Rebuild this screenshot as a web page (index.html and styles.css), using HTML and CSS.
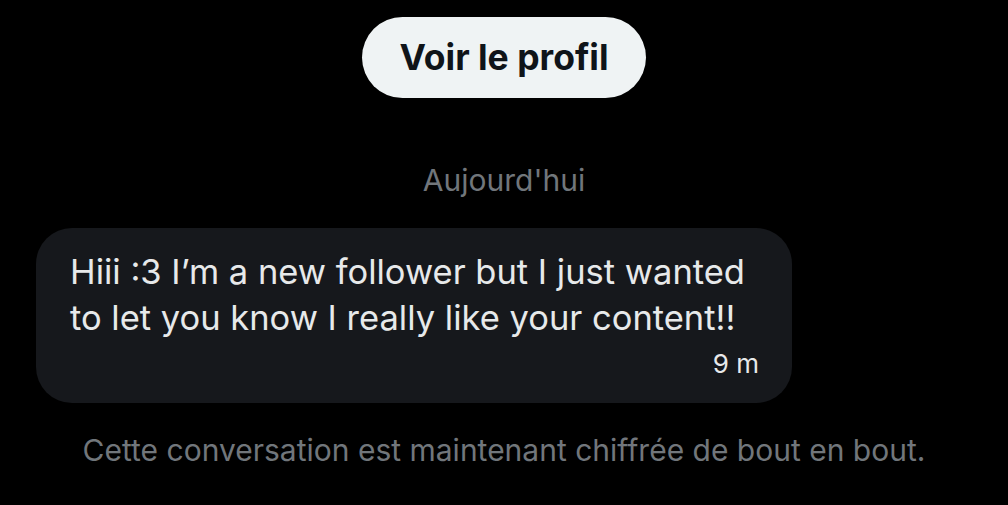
FILE: index.html
```html
<!DOCTYPE html>
<html lang="fr">
<head>
  <meta charset="UTF-8">
  <title>Messages</title>
  <link rel="stylesheet" href="styles.css">
</head>
<body>
  <div class="thread">
    <button class="profile-btn">Voir le profil</button>

    <div class="day">Aujourd'hui</div>

    <div class="row">
      <div class="bubble">
        <p class="text">Hiii :3 I’m a new follower but I just wanted to let you know I really like your content!!</p>
        <div class="time">9 m</div>
      </div>
    </div>

    <div class="notice">Cette conversation est maintenant chiffrée de bout en bout.</div>
  </div>
</body>
</html>
```

FILE: styles.css
```css
body {
  background-color: #000;
  color: #e7e9ea;
  font-family: Inter, "Noto Sans", sans-serif;
  margin: 0;
}
.thread {
  display: flex;
  flex-direction: column;
  align-items: center;
  padding-top: 17px;
}
.profile-btn {
  background-color: #eff3f4;
  color: #0f1419;
  border: none;
  border-radius: 41px;
  height: 81px;
  width: 284px;
  padding: 0;
  font-family: inherit;
  font-size: 35.5px;
  font-weight: 700;
  cursor: pointer;
}
.day {
  margin-top: 64px;
  color: #71767b;
  font-size: 30px;
  line-height: 36px;
}
.row {
  align-self: stretch;
  padding: 0 36px;
  margin-top: 30px;
}
.bubble {
  background-color: #16181c;
  border-radius: 36px;
  width: 756px;
  box-sizing: border-box;
  padding: 21px 33px 24px 34px;
}
.text {
  margin: 0;
  font-size: 34.5px;
  line-height: 46px;
}
.time {
  text-align: right;
  font-size: 26px;
  line-height: 30px;
  margin-top: 8px;
}
.notice {
  margin-top: 29px;
  color: #71767b;
  font-size: 30px;
  line-height: 36px;
}
```
